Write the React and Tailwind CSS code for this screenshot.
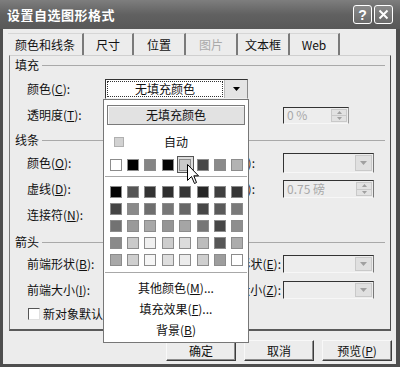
import React from "react";

const FONT = "font-['Noto_Sans_CJK_SC','Noto_Sans',sans-serif]";

function K({ children }) {
  return <span className="underline underline-offset-1">{children}</span>;
}

function Down({ c = "#000" }) {
  return (
    <svg width="7" height="4" viewBox="0 0 7 4">
      <path d="M0 0H7L3.5 4Z" fill={c} />
    </svg>
  );
}
function Up({ c = "#000" }) {
  return (
    <svg width="5" height="3" viewBox="0 0 5 3">
      <path d="M0 3H5L2.5 0Z" fill={c} />
    </svg>
  );
}
function SmallDown({ c = "#000" }) {
  return (
    <svg width="5" height="3" viewBox="0 0 5 3">
      <path d="M0 0H5L2.5 3Z" fill={c} />
    </svg>
  );
}

function Heading({ text, outer, inner }) {
  return (
    <div className={`${outer} pl-[5px] pr-[5px]`}>
      <div className={`${inner} flex items-center gap-[3px]`}>
        <span>{text}</span>
        <div className="flex-1 h-0 border-t border-[#a9a9a9] mt-[1px]" />
      </div>
    </div>
  );
}

function Row({ outer, label, right, rpad, mid, children }) {
  return (
    <div className={`${outer} pl-[17px]`}>
      <div className="h-[20px] flex items-center">
        <div className="w-[78px] whitespace-nowrap">{label}</div>
        {mid ? (
          mid
        ) : (
          <div className={`w-[178px] flex justify-end whitespace-nowrap ${rpad}`}>{right}</div>
        )}
        {children}
      </div>
    </div>
  );
}

function DisCombo({ h }) {
  return (
    <div className={`${h} w-[91px] flex border border-t-[#333] border-l-[#333] border-r-[#777] border-b-[#f7f7f7] bg-[#ededed]`}>
      <div className="flex-1" />
      <div className="w-[17px] my-[1px] mr-[1px] flex items-center justify-center bg-[#e0e0e0] border border-[#c9c9c9]">
        <Down c="#a0a0a0" />
      </div>
    </div>
  );
}

function Spin() {
  return (
    <div className="w-[16px] my-[1px] mr-[1px] flex flex-col">
      <div className="flex-1 flex items-center justify-center bg-[#e2e2e2] border border-[#c9c9c9]">
        <Up c="#a0a0a0" />
      </div>
      <div className="flex-1 flex items-center justify-center bg-[#e2e2e2] border border-t-0 border-[#c9c9c9]">
        <SmallDown c="#a0a0a0" />
      </div>
    </div>
  );
}

const row0 = ["#ffffff", "#000000", "#858585", "#050505", "#c9c9c9", "#474747", "#8a8a8a", "#b3b3b3"];
const grid = [
  ["#050505", "#555555", "#333333", "#2e2e2e", "#363636", "#262626", "#404040", "#363636"],
  ["#454545", "#8a8a8a", "#6e6e6e", "#777777", "#676767", "#474747", "#5a5a5a", "#7a7a7a"],
  ["#727272", "#9a9a9a", "#a8a8a8", "#959595", "#a5a5a5", "#767676", "#474747", "#8e8e8e"],
  ["#8a8a8a", "#cacaca", "#f0f0f0", "#cdcdcd", "#dcdcdc", "#bcbcbc", "#575757", "#acacac"],
  ["#a8a8a8", "#cfcfcf", "#f6f6f6", "#dedede", "#ececec", "#cfcfcf", "#9d9d9d", "#ffffff"],
];

function Sw({ c }) {
  return <div className="w-[12px] h-[12px] border border-[#8c8c8c]" style={{ background: c }} />;
}

function Popup() {
  return (
    <div className="absolute left-[103px] top-[99px] w-[146px] h-[244px] bg-white border border-[#777] flex flex-col">
      <div className="mt-[5px] mx-[3px] h-[20px] flex items-center justify-center bg-[#e2e2e2] border border-[#7a7a7a] shadow-[inset_1px_1px_0_#fafafa]">
        无填充颜色
      </div>
      <div className="mt-[3px] h-[28px] flex items-center pl-[10px]">
        <div className="w-[10px] h-[10px] bg-[#d2d2d2] border border-[#b0b0b0]" />
        <div className="flex-1 text-center">自动</div>
        <div className="w-[20px]" />
      </div>
      <div className="ml-[3px] w-[139px] grid grid-cols-8">
        {row0.map((c, i) => (
          <div key={i} className="h-[17px] flex items-center justify-center">
            {i === 4 ? (
              <div className="w-[17px] h-[17px] flex items-center justify-center bg-[#dcdcdc] border border-[#555]">
                <Sw c={c} />
              </div>
            ) : (
              <Sw c={c} />
            )}
          </div>
        ))}
      </div>
      <div className="mt-[3px] mx-[1px] h-0 border-t border-[#a8a8a8]" />
      <div className="mt-[6px] ml-[3px] w-[139px] grid grid-cols-8">
        {grid.flat().map((c, i) => (
          <div key={i} className="h-[17px] flex items-center justify-center">
            <Sw c={c} />
          </div>
        ))}
      </div>
      <div className="mt-[4px] mx-[1px] h-0 border-t border-[#a8a8a8]" />
      <div className="mt-[4px] flex flex-col">
        <div className="h-[21px] flex items-center justify-center">
          其他颜色(<K>M</K>)...
        </div>
        <div className="h-[21px] flex items-center justify-center">
          填充效果(<K>F</K>)...
        </div>
        <div className="h-[21px] flex items-center justify-center">
          背景(<K>B</K>)
        </div>
      </div>
    </div>
  );
}

function Cursor() {
  return (
    <svg className="absolute left-[187px] top-[164px]" width="13" height="21" viewBox="0 0 13 21">
      <path d="M0.5 0.5V16.5L4.5 12.5L7.5 19.5L9.5 18.5L6.8 11.8H11.5Z" fill="#fff" stroke="#000" strokeWidth="1" />
    </svg>
  );
}

const tabs = [
  { t: "颜色和线条", w: "w-[76px]" },
  { t: "尺寸", w: "w-[50px]" },
  { t: "位置", w: "w-[52px]" },
  { t: "图片", w: "w-[52px]", dis: true },
  { t: "文本框", w: "w-[52px]" },
  { t: "Web", w: "w-[50px]" },
];

function ComboC() {
  return (
    <div className="w-[143px] h-[20px] flex bg-white border border-t-[#333] border-l-[#333] border-r-[#888] border-b-[#eee]">
      <div className="flex-1 m-[1px] flex items-center justify-center border border-dotted border-[#333]">无填充颜色</div>
      <div className="w-[23px] flex items-center justify-center bg-[#e4e4e4] border-l border-[#bbb]">
        <Down />
      </div>
    </div>
  );
}

export default function App() {
  return (
    <div className={`relative w-[400px] h-[367px] overflow-hidden bg-[#4e4e4e] flex flex-col ${FONT} text-[12px] text-[#111] leading-none`}>
      {/* Title bar */}
      <div className="h-[29px] shrink-0 flex items-center pl-[7px] pr-[7px] bg-gradient-to-b from-[#7e7e7e] via-[#616161] to-[#585858]">
        <span className="text-white font-bold text-[13px] tracking-[0.5px]">设置自选图形格式</span>
        <div className="ml-auto flex gap-[2px]">
          <div className="w-[19px] h-[19px] rounded-[3px] border border-white bg-gradient-to-b from-[#8a8a8a] to-[#6a6a6a] flex items-center justify-center text-white font-bold text-[14px] font-['Liberation_Sans',sans-serif]">
            ?
          </div>
          <div className="w-[19px] h-[19px] rounded-[3px] border border-white bg-gradient-to-b from-[#8a8a8a] to-[#6a6a6a] flex items-center justify-center">
            <svg width="11" height="11" viewBox="0 0 11 11">
              <path d="M1.5 1.5L9.5 9.5M9.5 1.5L1.5 9.5" stroke="#fff" strokeWidth="2" />
            </svg>
          </div>
        </div>
      </div>

      {/* Body */}
      <div className="flex-1 ml-[3px] mr-[4px] mb-[3px] bg-[#ececec] flex flex-col">
        {/* Tabs */}
        <div className="pt-[4px] pl-[5px] flex">
          {tabs.map((tb, i) => (
            <div
              key={i}
              className={`${tb.w} h-[22px] flex items-center justify-center border-t border-t-[#d6d6d6] border-r-2 border-r-[#7a7a7a] ${tb.dis ? "text-[#aaaaaa]" : ""}`}
            >
              {tb.t}
            </div>
          ))}
        </div>

        {/* Panel */}
        <div className="ml-[6px] mr-[5px] h-[276px] border border-l-[#7a7a7a] border-t-[#cfcfcf] border-r-[#4a4a4a] border-b-2 border-b-[#5a5a5a] flex flex-col">
          <Heading text="填充" outer="h-[23px]" inner="h-[18px]" />
          <Row outer="h-[26px]" label={<>颜色(<K>C</K>):</>} mid={<ComboC />} />
          <Row outer="h-[25px]" label={<>透明度(<K>T</K>):</>} right={null} rpad="">
            <div className="h-[17px] w-[66px] flex border border-t-[#333] border-l-[#333] border-r-[#999] border-b-[#f7f7f7] bg-[#ededed]">
              <div className="flex-1 flex items-center pl-[3px] text-[#a8a8a8]">0 %</div>
              <Spin />
            </div>
          </Row>
          <Heading text="线条" outer="h-[23px]" inner="h-[20px]" />
          <Row outer="h-[26px]" label={<>颜色(<K>O</K>):</>} right={<>样式(<K>S</K>):</>} rpad="pr-[28px]">
            <DisCombo h="h-[20px]" />
          </Row>
          <Row outer="h-[26px]" label={<>虚线(<K>D</K>):</>} right={<>粗细(<K>W</K>):</>} rpad="pr-[28px]">
            <div className="h-[18px] w-[91px] flex border border-t-[#333] border-l-[#333] border-r-[#777] border-b-[#f7f7f7] bg-[#ededed]">
              <div className="flex-1 flex items-center pl-[3px] text-[#a8a8a8]">0.75 磅</div>
              <Spin />
            </div>
          </Row>
          <Row outer="h-[27px]" label={<>连接符(<K>N</K>):</>} right={null} rpad="" />
          <Heading text="箭头" outer="h-[22px]" inner="h-[20px]" />
          <Row outer="h-[26px]" label={<>前端形状(<K>B</K>):</>} right={<>后端形状(<K>E</K>):</>} rpad="pr-[2px]">
            <DisCombo h="h-[18px]" />
          </Row>
          <Row outer="h-[24px]" label={<>前端大小(<K>I</K>):</>} right={<>后端大小(<K>Z</K>):</>} rpad="pr-[2px]">
            <DisCombo h="h-[18px]" />
          </Row>
          <div className="pl-[18px] h-[20px] flex items-center gap-[3px]">
            <div className="w-[12px] h-[12px] bg-white border border-t-[#555] border-l-[#555] border-r-[#e0e0e0] border-b-[#e0e0e0]" />
            <span>新对象默认值(<K>F</K>)</span>
          </div>
        </div>

        {/* Buttons */}
        <div className="mt-[9px] pr-[4px] flex justify-end gap-[8px]">
          {[
            <>确定</>,
            <>取消</>,
            <>预览(<K>P</K>)</>,
          ].map((b, i) => (
            <div
              key={i}
              className="w-[70px] h-[21px] flex items-center justify-center bg-[#ececec] border border-t-[#f8f8f8] border-l-[#f8f8f8] border-r-[#3c3c3c] border-b-[#3c3c3c] shadow-[inset_-1px_-1px_0_#8c8c8c]"
            >
              {b}
            </div>
          ))}
        </div>
      </div>

      <Popup />
      <Cursor />
    </div>
  );
}
